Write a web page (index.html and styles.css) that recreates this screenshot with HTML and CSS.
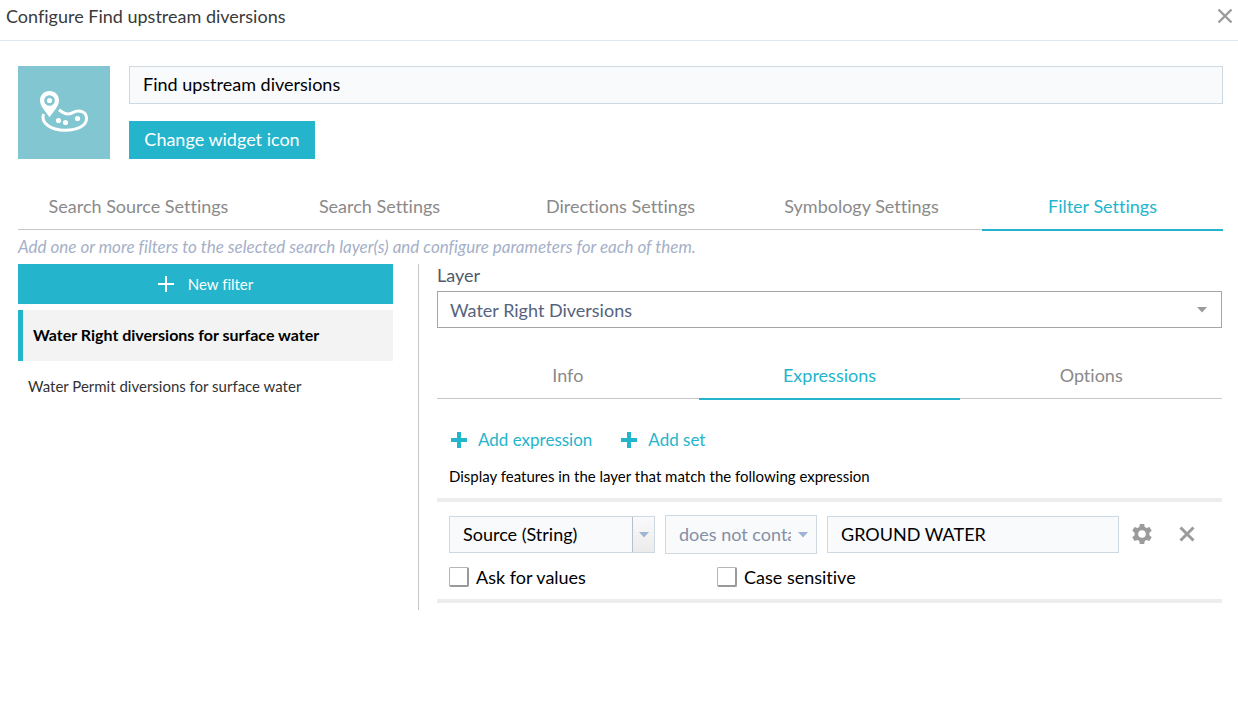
FILE: index.html
```html
<!DOCTYPE html>
<html lang="en">
<head>
<meta charset="utf-8">
<title>Configure Find upstream diversions</title>
<link rel="stylesheet" href="styles.css">
</head>
<body>
<header class="dialog-header">
  <h1 class="dialog-title">Configure Find upstream diversions</h1>
  <button class="icon-button" type="button" aria-label="Close">
    <svg width="16" height="16" viewBox="0 0 16 16"><path d="M1.500 1.500l13 13M14.500 1.500l-13 13" fill="none" stroke="#9b9b9b" stroke-width="2.400"/></svg>
  </button>
</header>
<main class="dialog-body">
  <section class="widget">
    <div class="widget-icon">
      <svg width="92" height="93" viewBox="0 0 92 93">
        <path fill="#fff" fill-rule="evenodd" d="M31.500 25C25.800 25 22 29.200 22 34.500c0 3 1.200 5.200 3 8l6.500 8.800 6.500-8.800c1.800-2.800 3-5 3-8C41 29.200 37.200 25 31.500 25zM31.500 29.200a5.300 5.300 0 1 1 0 10.600a5.300 5.300 0 1 1 0-10.600z"/>
        <circle cx="31.500" cy="34.500" r="2.600" fill="#fff"/>
        <path d="M25.500 48C22.500 57 33 64.200 47 64.200C60 64.200 68.500 59.500 68.500 52.500C68.500 47.500 65 45 60.500 45C55 45 54.500 48 50 48C46 48 44.500 46.500 41 43.800" fill="none" stroke="#fff" stroke-width="3"/>
        <circle cx="40.500" cy="54.500" r="2.600" fill="#fff"/><circle cx="47.500" cy="56.500" r="2.600" fill="#fff"/><circle cx="59.500" cy="52.500" r="2.600" fill="#fff"/>
      </svg>
    </div>
    <div class="widget-fields">
      <input class="field" type="text" value="Find upstream diversions" aria-label="Widget name">
      <button class="primary change-icon" type="button">Change widget icon</button>
    </div>
  </section>
  <nav class="tabs" aria-label="Settings">
    <button class="tab" type="button">Search Source Settings</button>
    <button class="tab" type="button">Search Settings</button>
    <button class="tab" type="button">Directions Settings</button>
    <button class="tab" type="button">Symbology Settings</button>
    <button class="tab active" type="button">Filter Settings</button>
  </nav>
  <p class="hint">Add one or more filters to the selected search layer(s) and configure parameters for each of them.</p>
  <div class="columns">
    <aside class="filters">
      <button class="primary new-filter" type="button">
        <svg width="16" height="16" viewBox="0 0 16 16"><path d="M8 0v16M0 8h16" stroke="#fff" stroke-width="2"/></svg>
        New filter
      </button>
      <button class="filter selected" type="button">Water Right diversions for surface water</button>
      <button class="filter" type="button">Water Permit diversions for surface water</button>
    </aside>
    <section class="details">
      <label class="layer-label" for="layer">Layer</label>
      <div class="select layer">
        <select id="layer"><option>Water Right Diversions</option></select>
        <svg class="caret" width="10" height="6" viewBox="0 0 10 6"><path d="M0 0h10L5 5.500z"/></svg>
      </div>
      <nav class="tabs inner" aria-label="Filter">
        <button class="tab" type="button">Info</button>
        <button class="tab active" type="button">Expressions</button>
        <button class="tab" type="button">Options</button>
      </nav>
      <div class="actions">
        <button class="add" type="button"><svg width="16" height="16" viewBox="0 0 16 16"><path d="M8 0v16M0 8h16" stroke="#24b5cc" stroke-width="4"/></svg>Add expression</button>
        <button class="add" type="button"><svg width="16" height="16" viewBox="0 0 16 16"><path d="M8 0v16M0 8h16" stroke="#24b5cc" stroke-width="4"/></svg>Add set</button>
      </div>
      <p class="match">Display features in the layer that match the following expression</p>
      <div class="expression">
        <div class="row">
          <div class="select source">
            <select aria-label="Field"><option>Source (String)</option></select>
            <span class="arrow-box"><svg width="10" height="6" viewBox="0 0 10 6"><path d="M0 0h10L5 5.500z"/></svg></span>
          </div>
          <div class="select operator">
            <select aria-label="Operator"><option>does not contain</option></select>
            <svg class="caret" width="10" height="6" viewBox="0 0 10 6"><path d="M0 0h10L5 5.500z"/></svg>
          </div>
          <input class="field value" type="text" value="GROUND WATER" aria-label="Value">
          <button class="icon-button gear" type="button" aria-label="Options">
            <svg width="20" height="20" viewBox="0 0 20 20"><path fill="#9b9b9b" fill-rule="evenodd" d="M7.800 0h4.400l.5 2.900 1.900 1.100 2.800-1.100 2.300 3.900-2.300 1.900v2.600l2.300 1.900-2.300 3.900-2.800-1.100-1.900 1.100-.5 2.900H7.800l-.5-2.900L5.400 16l-2.800 1.100-2.300-3.900 2.300-1.900V8.700L.3 6.800l2.300-3.900L5.400 4l1.900-1.100zM10 6.200a3.800 3.800 0 1 0 0 7.600a3.800 3.800 0 1 0 0-7.600z"/></svg>
          </button>
          <button class="icon-button remove" type="button" aria-label="Remove">
            <svg width="16" height="16" viewBox="0 0 16 16"><path d="M1.500 1.500l13 13M14.500 1.500l-13 13" stroke="#9b9b9b" stroke-width="3"/></svg>
          </button>
        </div>
        <div class="checks">
          <label class="check"><input type="checkbox">Ask for values</label>
          <label class="check"><input type="checkbox">Case sensitive</label>
        </div>
      </div>
    </section>
  </div>
</main>
</body>
</html>
```
FILE: styles.css
```css
* { box-sizing: border-box; }
body {
  margin: 0;
  background: #fff;
  color: #000;
  font-family: Lato, sans-serif;
  font-size: 18px;
  line-height: 24px;
  font-variant-ligatures: none;
}
button, input, select { font: inherit; font-variant-ligatures: none; color: inherit; margin: 0; border-radius: 0; }
button { border: 0; padding: 0; background: none; cursor: pointer; }
h1, p { margin: 0; }
svg { display: block; flex: none; }

.dialog-header {
  display: flex;
  justify-content: space-between;
  align-items: flex-start;
  height: 41px;
  padding: 4px 5px 0 6px;
  border-bottom: 1px solid #dfe8f0;
}
.dialog-title { font-size: 18px; font-weight: 400; color: #3a3a3a; }
.icon-button { display: flex; padding: 4px 0; }
.dialog-body { padding: 25px 15px 0 18px; }

.widget { display: flex; gap: 19px; }
.widget-icon { width: 92px; height: 93px; background: #81c6d0; }
.widget-fields { flex: 1; display: flex; flex-direction: column; align-items: flex-start; gap: 17px; }
.field {
  width: 100%;
  height: 38px;
  padding: 0 13px 2px;
  border: 1px solid #cfd9e2;
  background: #f9fafc;
}
.primary { background: #24b5cc; color: #fff; }
.change-icon { height: 38px; width: 186px; padding-bottom: 2px; }

.tabs { display: flex; height: 45px; margin-top: 26px; box-shadow: inset 0 -1px #c8c8c8; }
.tab {
  flex: 1 1 0;
  height: 46px;
  padding-bottom: 2px;
  border-bottom: 2px solid transparent;
  color: #8a8a8a;
  white-space: nowrap;
}
.tab.active { color: #24b5cc; border-color: #24b5cc; }

.hint { margin-top: 6px; font-size: 17px; line-height: 22px; font-style: italic; color: #a5b0c8; }
.columns { display: flex; margin-top: 6px; }
.filters { width: 375px; flex: none; margin-right: 25px; font-size: 15px; }
.new-filter {
  display: flex;
  align-items: center;
  justify-content: center;
  gap: 14px;
  width: 100%;
  height: 40px;
  margin-bottom: 6px;
}
.filter { display: block; width: 100%; height: 51px; padding: 0 0 1px 10px; text-align: left; color: #333; }
.filter.selected { border-left: 5px solid #24b5cc; background: #f3f3f3; color: #000; font-size: 16px; font-weight: 700; }

.details { flex: 1; min-width: 0; padding: 0 1px 7px 18px; border-left: 1px solid #c8c8c8; }
.layer-label { display: block; height: 27px; line-height: 22px; color: #505a6e; }
.select { position: relative; }
.select select {
  display: block;
  width: 100%;
  height: 37px;
  padding: 0 40px 2px 13px;
  border: 1px solid #cfd9e2;
  background: #f9fafc;
  appearance: none;
}
.layer select { padding: 0 40px 0 12px; border-color: #a5a5a5; background: #fff; color: #56637d; }
.caret { position: absolute; right: 15px; top: 16px; fill: #9b9b9b; pointer-events: none; }
.inner { margin-top: 26px; }

.actions { display: flex; gap: 29px; margin-top: 29px; padding-left: 14px; }
.add { display: flex; align-items: center; gap: 11px; font-size: 17px; color: #24b5cc; }
.match { margin-top: 12px; padding-left: 12px; font-size: 15px; }
.expression {
  margin-top: 10px;
  padding: 13px 27px 10px 12px;
  border: solid #ededed;
  border-width: 4px 0;
}
.row { display: flex; align-items: center; gap: 10px; }
.source { width: 206px; }
.arrow-box {
  position: absolute;
  inset: 1px 1px 1px auto;
  display: flex;
  align-items: center;
  justify-content: center;
  width: 22px;
  border-left: 1px solid #b5bfcf;
  background: linear-gradient(#fafafc, #ebebeb);
  fill: #9fb4d5;
  pointer-events: none;
}
.operator { width: 152px; }
.operator select { height: 39px; padding-right: 25px; color: #8390a5; }
.operator .caret { right: 9px; top: 17px; fill: #9fb4d5; }
.value { flex: 1; min-width: 0; height: 37px; }
.gear, .remove { padding: 0 0 2px; }
.gear { margin-left: 3px; }
.remove { margin-left: 17px; }
.checks { display: flex; margin-top: 11px; }
.check { display: flex; align-items: center; gap: 7px; width: 268px; }
.check input {
  width: 20px;
  height: 20px;
  appearance: none;
  border: solid;
  border-width: 1px 2px 2px 1px;
  border-color: #b5b5b5 #999 #999 #b5b5b5;
  border-radius: 2px;
  background: #fff;
}
```
